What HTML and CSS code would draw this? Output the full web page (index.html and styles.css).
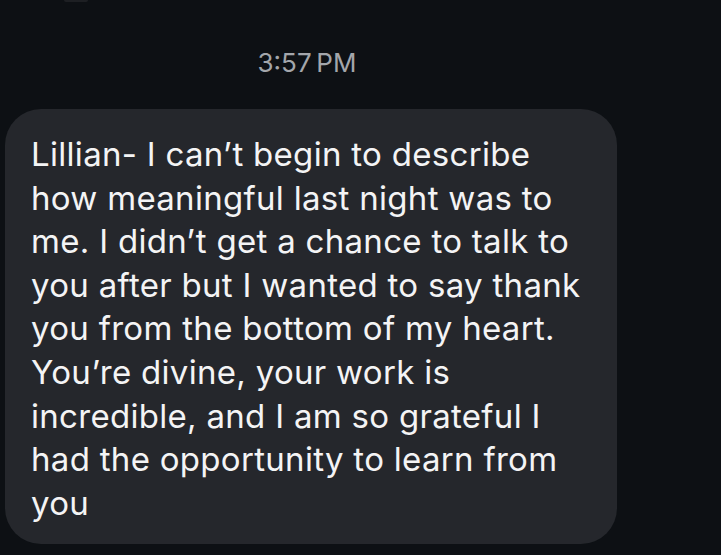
FILE: index.html
```html
<!DOCTYPE html>
<html>
<head>
<meta charset="utf-8">
<link rel="stylesheet" href="styles.css">
</head>
<body>
<div class="thread">
  <div class="prev-edge"></div>
  <div class="timestamp">3:57&#8201;PM</div>
  <div class="bubble">
    <p class="msg">Lillian- I can’t begin to describe<br>how meaningful last night was to<br>me. I didn’t get a chance to talk to<br>you after but I wanted to say thank<br>you from the bottom of my heart.<br>You’re divine, your work is<br>incredible, and I am so grateful I<br>had the opportunity to learn from<br>you</p>
  </div>
</div>
</body>
</html>
```

FILE: styles.css
```css
html, body {
  margin: 0;
  padding: 0;
  background: #0d1014;
  height: 100%;
  overflow: hidden;
}

.thread {
  display: flex;
  flex-direction: column;
  width: 614px;
  font-family: Inter, "Noto Sans", sans-serif;
}

.prev-edge {
  width: 24px;
  height: 2px;
  margin-left: 64px;
  background: #1d1f23;
  border-radius: 0 0 6px 6px;
}

.timestamp {
  margin-top: 46px;
  text-align: center;
  color: #a3a6ab;
  font-size: 26px;
  line-height: 30px;
  letter-spacing: 0;
}

.bubble {
  margin-top: 31px;
  margin-left: 5px;
  width: 612px;
  height: 435px;
  box-sizing: border-box;
  background: #25272c;
  border-radius: 36px;
  padding: 24px 0 0 26px;
}

.msg {
  margin: 0;
  color: #f4f4f5;
  font-size: 33px;
  line-height: 43.6px;
  letter-spacing: 0.3px;
}
```
